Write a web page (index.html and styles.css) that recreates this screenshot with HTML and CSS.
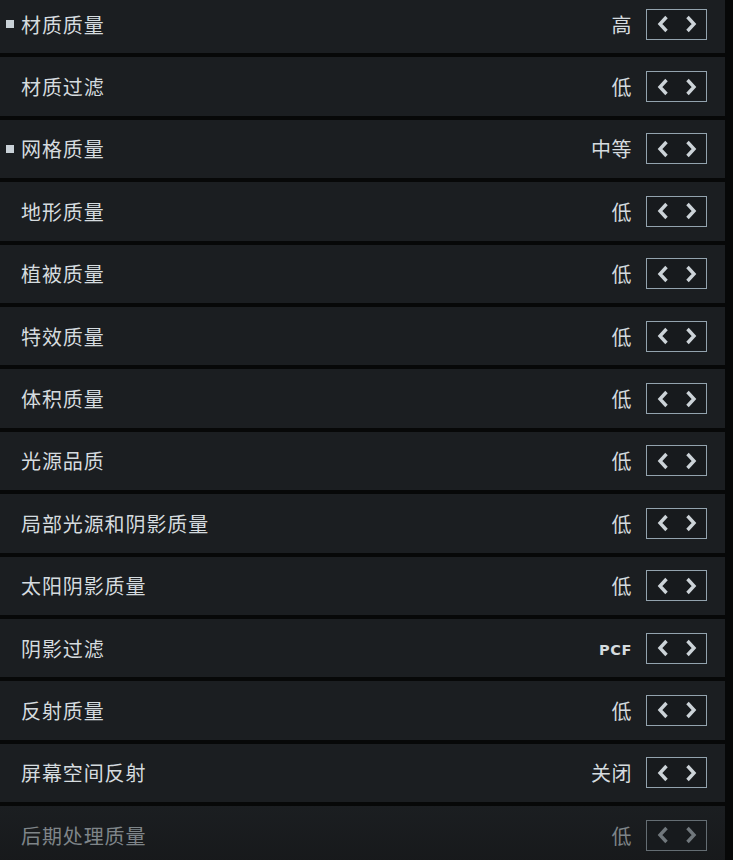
FILE: index.html
```html
<!DOCTYPE html>
<html lang="zh-CN">
<head>
<meta charset="utf-8">
<title>图形设置</title>
<link rel="stylesheet" href="styles.css">
</head>
<body>
<div class="list">
  <div class="row"><span class="mark"></span><span class="label">材质质量</span><span class="value">高</span><div class="spin"><svg viewBox="0 0 12 18"><polyline points="9.5,2 3,9 9.5,16"/></svg><svg viewBox="0 0 12 18"><polyline points="2.5,2 9,9 2.5,16"/></svg></div></div>
  <div class="row"><span class="label">材质过滤</span><span class="value">低</span><div class="spin"><svg viewBox="0 0 12 18"><polyline points="9.5,2 3,9 9.5,16"/></svg><svg viewBox="0 0 12 18"><polyline points="2.5,2 9,9 2.5,16"/></svg></div></div>
  <div class="row"><span class="mark"></span><span class="label">网格质量</span><span class="value">中等</span><div class="spin"><svg viewBox="0 0 12 18"><polyline points="9.5,2 3,9 9.5,16"/></svg><svg viewBox="0 0 12 18"><polyline points="2.5,2 9,9 2.5,16"/></svg></div></div>
  <div class="row"><span class="label">地形质量</span><span class="value">低</span><div class="spin"><svg viewBox="0 0 12 18"><polyline points="9.5,2 3,9 9.5,16"/></svg><svg viewBox="0 0 12 18"><polyline points="2.5,2 9,9 2.5,16"/></svg></div></div>
  <div class="row"><span class="label">植被质量</span><span class="value">低</span><div class="spin"><svg viewBox="0 0 12 18"><polyline points="9.5,2 3,9 9.5,16"/></svg><svg viewBox="0 0 12 18"><polyline points="2.5,2 9,9 2.5,16"/></svg></div></div>
  <div class="row"><span class="label">特效质量</span><span class="value">低</span><div class="spin"><svg viewBox="0 0 12 18"><polyline points="9.5,2 3,9 9.5,16"/></svg><svg viewBox="0 0 12 18"><polyline points="2.5,2 9,9 2.5,16"/></svg></div></div>
  <div class="row"><span class="label">体积质量</span><span class="value">低</span><div class="spin"><svg viewBox="0 0 12 18"><polyline points="9.5,2 3,9 9.5,16"/></svg><svg viewBox="0 0 12 18"><polyline points="2.5,2 9,9 2.5,16"/></svg></div></div>
  <div class="row"><span class="label">光源品质</span><span class="value">低</span><div class="spin"><svg viewBox="0 0 12 18"><polyline points="9.5,2 3,9 9.5,16"/></svg><svg viewBox="0 0 12 18"><polyline points="2.5,2 9,9 2.5,16"/></svg></div></div>
  <div class="row"><span class="label">局部光源和阴影质量</span><span class="value">低</span><div class="spin"><svg viewBox="0 0 12 18"><polyline points="9.5,2 3,9 9.5,16"/></svg><svg viewBox="0 0 12 18"><polyline points="2.5,2 9,9 2.5,16"/></svg></div></div>
  <div class="row"><span class="label">太阳阴影质量</span><span class="value">低</span><div class="spin"><svg viewBox="0 0 12 18"><polyline points="9.5,2 3,9 9.5,16"/></svg><svg viewBox="0 0 12 18"><polyline points="2.5,2 9,9 2.5,16"/></svg></div></div>
  <div class="row"><span class="label">阴影过滤</span><span class="value latin">PCF</span><div class="spin"><svg viewBox="0 0 12 18"><polyline points="9.5,2 3,9 9.5,16"/></svg><svg viewBox="0 0 12 18"><polyline points="2.5,2 9,9 2.5,16"/></svg></div></div>
  <div class="row"><span class="label">反射质量</span><span class="value">低</span><div class="spin"><svg viewBox="0 0 12 18"><polyline points="9.5,2 3,9 9.5,16"/></svg><svg viewBox="0 0 12 18"><polyline points="2.5,2 9,9 2.5,16"/></svg></div></div>
  <div class="row"><span class="label">屏幕空间反射</span><span class="value">关闭</span><div class="spin"><svg viewBox="0 0 12 18"><polyline points="9.5,2 3,9 9.5,16"/></svg><svg viewBox="0 0 12 18"><polyline points="2.5,2 9,9 2.5,16"/></svg></div></div>
  <div class="row dim"><span class="label">后期处理质量</span><span class="value">低</span><div class="spin"><svg viewBox="0 0 12 18"><polyline points="9.5,2 3,9 9.5,16"/></svg><svg viewBox="0 0 12 18"><polyline points="2.5,2 9,9 2.5,16"/></svg></div></div>
</div>
</body>
</html>
```
FILE: styles.css
```css
html, body {
  margin: 0;
  padding: 0;
  height: 100%;
  overflow: hidden;
}
body {
  background: #070808;
  font-family: "Noto Sans CJK SC", "Noto Sans", sans-serif;
}
.list {
  width: 725px;
  margin-top: -5px;
  display: flex;
  flex-direction: column;
  gap: 4px;
}
.row {
  position: relative;
  height: 58.4px;
  display: flex;
  align-items: center;
  padding: 0 18px 0 21px;
  background: #1b1e21;
  color: #d5dbdf;
  font-size: 20px;
  font-weight: 400;
}
.mark {
  position: absolute;
  left: 6px;
  top: 50%;
  width: 8px;
  height: 8px;
  margin-top: -4px;
  background: #c9d1d7;
}
.label {
  flex: 1;
  letter-spacing: 0.9px;
}
.value {
  margin-right: 14px;
  letter-spacing: 0.5px;
}
.value.latin {
  font-family: "DejaVu Sans", "Noto Sans", sans-serif;
  font-weight: 700;
  font-size: 14.5px;
  letter-spacing: 0.6px;
  padding-top: 3px;
}
.spin {
  width: 59px;
  height: 29px;
  border: 1px solid #93a3ae;
  background: #171a1d;
  display: flex;
  align-items: center;
  justify-content: center;
  gap: 16px;
}
.spin svg {
  width: 12px;
  height: 18px;
}
.spin polyline {
  fill: none;
  stroke: #ccd3d8;
  stroke-width: 3.4;
  stroke-linejoin: miter;
  stroke-linecap: butt;
}
.row.dim {
  color: #7f8589;
  background: linear-gradient(#1b1e21, #17191b);
}
.row.dim .spin {
  border-color: #646d73;
}
.row.dim polyline {
  stroke: #70777c;
}
```
